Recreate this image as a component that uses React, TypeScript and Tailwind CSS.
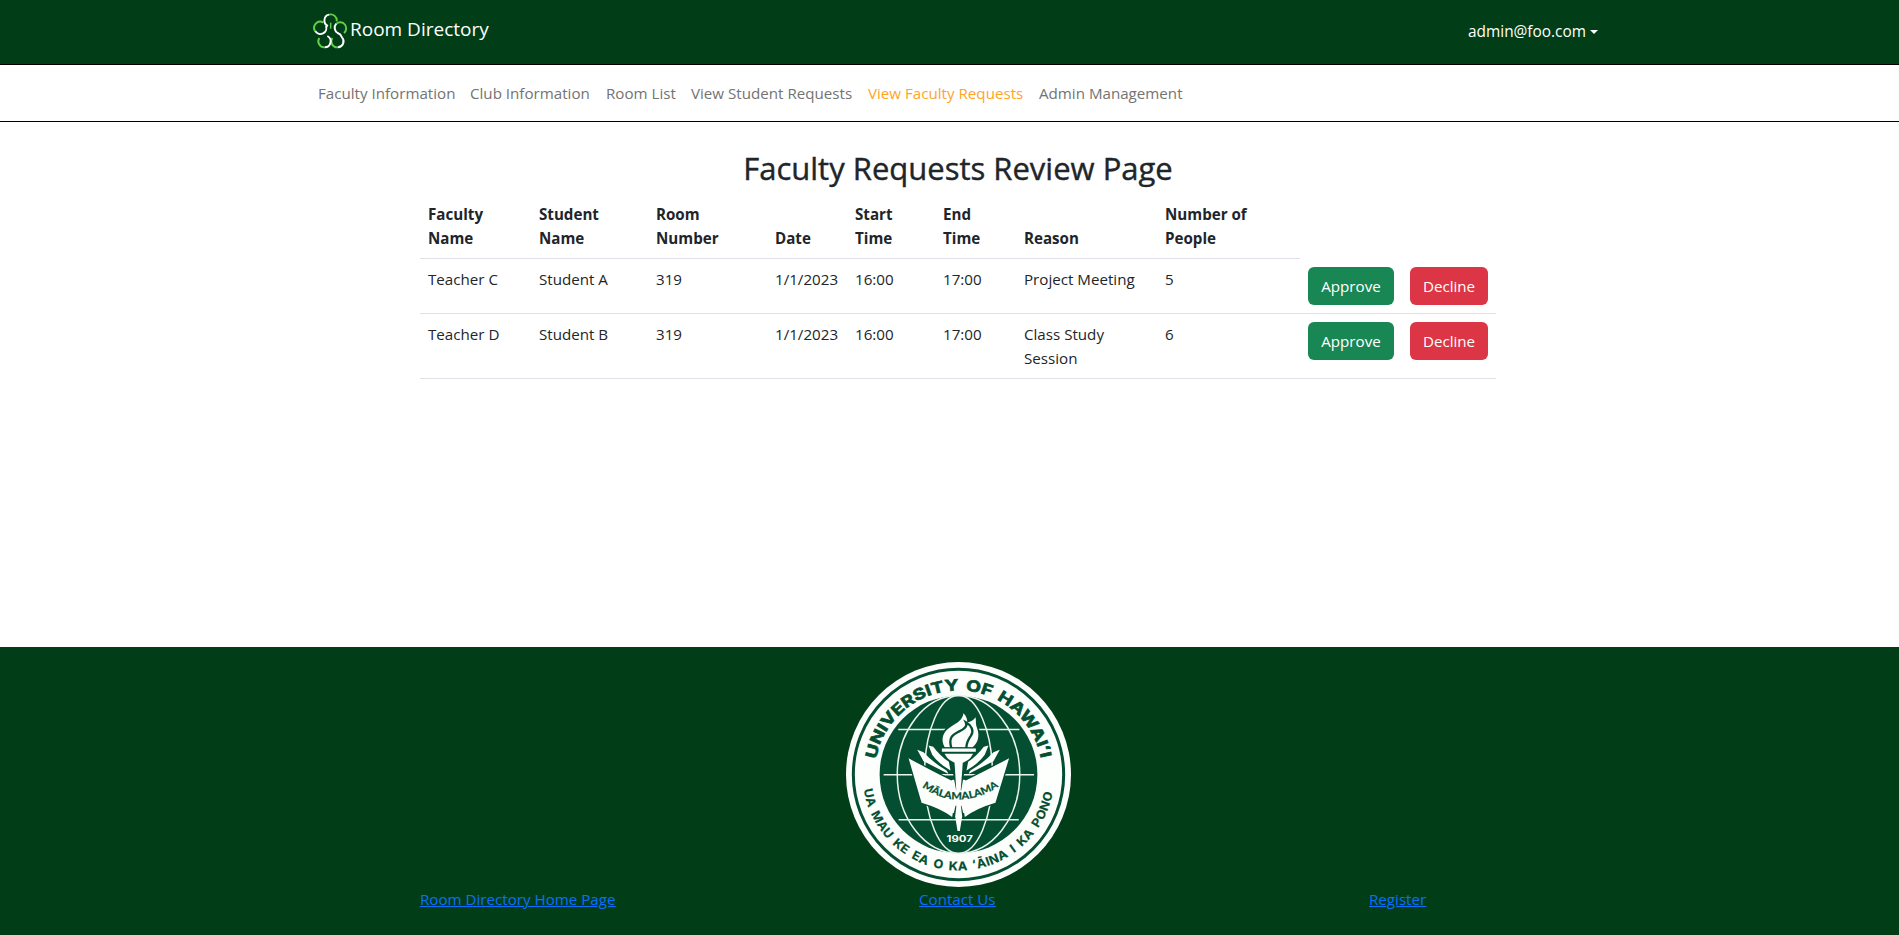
import React from "react";

const navItems = [
  { label: "Faculty Information", width: "w-[152px]" },
  { label: "Club Information", width: "w-[136px]" },
  { label: "Room List", width: "w-[85px]" },
  { label: "View Student Requests", width: "w-[177px]" },
  { label: "View Faculty Requests", width: "w-[171px]", active: true },
  { label: "Admin Management", width: "w-[162px]" },
];

const headers = [
  "Faculty Name",
  "Student Name",
  "Room Number",
  "Date",
  "Start Time",
  "End Time",
  "Reason",
  "Number of People",
];

const rows = [
  ["Teacher C", "Student A", "319", "1/1/2023", "16:00", "17:00", "Project Meeting", "5"],
  ["Teacher D", "Student B", "319", "1/1/2023", "16:00", "17:00", "Class Study Session", "6"],
];

function Logo() {
  return (
    <svg width="36" height="36" viewBox="34 39 108 108" fill="none" strokeWidth="5.800">
      <g stroke="#62cf45">
        <path d="M85 44 A18 18 0 0 1 108 64" />
        <path d="M68 68 A18 18 0 0 0 44 94" />
        <path d="M107 71 A18 18 0 0 1 130 99" />
        <path d="M56 114 A18 18 0 0 0 72 142" />
        <path d="M112 142 A18 18 0 0 1 95 114" />
        <path d="M90 68 V86" strokeWidth="4.500" />
      </g>
      <g stroke="#ffffff">
        <path d="M85 44 A18 18 0 0 0 82 78" />
        <path d="M44 94 A18 18 0 0 0 76 78" />
        <path d="M107 71 A18 18 0 0 0 111 99 Q120 102 124 112 A18 18 0 0 1 112 142" />
        <path d="M72 142 A18 18 0 0 0 80 108" />
      </g>
    </svg>
  );
}

function Seal() {
  return (
    <svg width="225" height="225" viewBox="29 66 676 676">
      <defs>
        <path id="arc-top" d="M119.100 358 A252 252 0 0 1 614.900 358" />
        <path id="arc-bottom" d="M82.500 449 A288 288 0 0 0 651.500 449" />
        <path id="arc-book" d="M258 441 Q308 479 367 479 Q430 478 486 441" />
      </defs>
      <circle cx="367" cy="404" r="338" fill="#fcfffc" />
      <circle cx="367" cy="404" r="316" fill="none" stroke="#044f31" strokeWidth="9" />
      <circle cx="367" cy="404" r="237" fill="#044f31" />
      <g fill="none" stroke="#e9f5ee" strokeWidth="4.500">
        <ellipse cx="367" cy="404" rx="184" ry="237" />
        <ellipse cx="367" cy="404" rx="102" ry="237" />
        <path d="M186 269 H550 M142 405 H594 M187 540 H548" />
      </g>
      <path
        d="M217 355 Q280 390 345 422 L350 420 H384 L389 422 Q454 390 519 355 L478 489 Q420 506 386 532 L384 520 H350 L348 532 Q314 506 256 489Z"
        fill="#fcfffc"
        stroke="#044f31"
        strokeWidth="8"
        paintOrder="stroke"
      />
      <g fill="#fcfffc">
        <path d="M243 330 L262 337 Q290 368 331 392 Q335 396 336 402 L262 364Z" />
        <path d="M277 317 L291 321 Q313 350 338 366 L343 392 Q305 370 288 345Z" />
        <path d="M491 330 L472 337 Q444 368 403 392 Q399 396 398 402 L472 364Z" />
        <path d="M457 317 L443 321 Q421 350 396 366 L391 392 Q429 370 446 345Z" />
      </g>
      <path d="M344 366 H390 L375 452 H360Z M358 498 H376 L385 536 H349Z" fill="#044f31" />
      <path d="M355 366 H380 L373 462 H361Z" fill="#fcfffc" />
      <path d="M361 496 H374 L378 530 L371 574 H364 L357 530Z" fill="#fcfffc" />
      <path
        d="M326 323 C312 298 320 275 343 261 C365 247 378 241 382 220 C391 229 394 239 393 248 C405 246 414 239 418 232 C421 243 417 250 423 265 C432 291 424 311 408 323Z"
        fill="#fcfffc"
        stroke="#044f31"
        strokeWidth="10"
        paintOrder="stroke"
      />
      <path
        d="M346 326 C336 295 347 286 368 275 C384 268 395 259 389 247 C406 256 414 273 405 286 C397 300 389 309 391 326"
        fill="none"
        stroke="#044f31"
        strokeWidth="7"
      />
      <path d="M317 326 H419 V336 H317Z" fill="#fcfffc" stroke="#044f31" strokeWidth="7" paintOrder="stroke" />
      <path d="M325 342 H411 Q398 368 368 371 Q338 368 325 342Z" fill="#fcfffc" />
      <g fill="#044f31" stroke="#044f31" fontFamily="Inter, sans-serif" fontWeight="700">
        <text fontSize="46" strokeWidth="2" wordSpacing="5">
          <textPath href="#arc-top" textLength="698" lengthAdjust="spacingAndGlyphs">
            UNIVERSITY OF HAWAIʻI
          </textPath>
        </text>
        <text fontSize="36" strokeWidth="0.5" wordSpacing="7" letterSpacing="1">
          <textPath href="#arc-bottom" textLength="806" lengthAdjust="spacingAndGlyphs">
            UA MAU KE EA O KA ʻĀINA I KA PONO
          </textPath>
        </text>
        <text fontSize="30" strokeWidth="0.8" fontFamily="Lato, sans-serif">
          <textPath href="#arc-book" textLength="246" lengthAdjust="spacingAndGlyphs">
            MĀLAMALAMA
          </textPath>
        </text>
      </g>
      <text
        x="331"
        y="608"
        fontSize="26"
        textLength="79"
        lengthAdjust="spacingAndGlyphs"
        fill="#fcfffc"
        fontFamily="Inter, sans-serif"
        fontWeight="700"
      >
        1907
      </text>
    </svg>
  );
}

export default function App() {
  return (
    <div className="h-[935px] w-full overflow-hidden bg-white font-['Open_Sans',sans-serif] text-[15.150px] leading-6 text-[#212529]">
      <div className="flex h-full w-[1916px] flex-col">
        <header className="h-[65px] shrink-0 border-b border-black bg-[#013e17]">
          <div className="mx-auto flex w-[1296px] items-start justify-between pl-[2px]">
            <div className="flex items-start pt-[13px]">
              <Logo />
              <span className="pl-[2px] pt-[4px] text-[19px] leading-6 text-white">Room Directory</span>
            </div>
            <div className="flex items-center gap-[4px] pr-[8px] pt-[20px] text-white">
              <span className="text-[15.400px]">admin@foo.com</span>
              <span className="border-x-[4.800px] border-t-[4.800px] border-x-transparent border-t-white" />
            </div>
          </div>
        </header>
        <nav className="h-[57px] shrink-0 border-b border-black">
          <div className="mx-auto flex w-[1296px] pt-[16px]">
            {navItems.map((n) => (
              <a
                key={n.label}
                className={`${n.width} shrink-0 whitespace-nowrap pl-[8px] ${n.active ? "text-[#ffa51f]" : "text-[#737373]"}`}
              >
                {n.label}
              </a>
            ))}
          </div>
        </nav>
        <main className="mx-auto w-[1076px] flex-1 pt-[27px]">
          <h2 className="mb-[7px] text-center text-[31px] font-medium leading-[38px] [-webkit-text-stroke:0.4px_#212529]">
            Faculty Requests Review Page
          </h2>
          <table className="w-[1076px] table-fixed border-separate border-spacing-0 text-left">
            <colgroup>
              <col className="w-[111px]" />
              <col className="w-[117px]" />
              <col className="w-[119px]" />
              <col className="w-[80px]" />
              <col className="w-[88px]" />
              <col className="w-[81px]" />
              <col className="w-[141px]" />
              <col className="w-[143px]" />
              <col className="w-[102px]" />
              <col className="w-[94px]" />
            </colgroup>
            <thead>
              <tr className="h-[65px]">
                {headers.map((h) => (
                  <th key={h} className="border-b border-[#dee2e6] py-2 pl-2 pr-6 align-bottom font-bold">
                    {h}
                  </th>
                ))}
              </tr>
            </thead>
            <tbody>
              {rows.map((r) => (
                <tr key={r[0]} className="align-top">
                  {r.map((c, i) => (
                    <td key={i} className="border-b border-[#dee2e6] py-2 pl-2">
                      {c}
                    </td>
                  ))}
                  <td className="border-b border-[#dee2e6] p-2">
                    <button className="block h-[38px] w-[86px] rounded-md bg-[#198754] text-white">Approve</button>
                  </td>
                  <td className="border-b border-[#dee2e6] p-2">
                    <button className="block h-[38px] w-[78px] rounded-md bg-[#dc3545] text-white">Decline</button>
                  </td>
                </tr>
              ))}
            </tbody>
          </table>
        </main>
        <footer className="h-[288px] shrink-0 bg-[#013e17] pt-[15px]">
          <div className="mx-auto flex w-[1076px] flex-col items-center">
            <Seal />
            <div className="flex w-full text-[#0d6efd] underline">
              <a className="w-[499px]">Room Directory Home Page</a>
              <a className="w-[450px]">Contact Us</a>
              <a>Register</a>
            </div>
          </div>
        </footer>
      </div>
    </div>
  );
}
